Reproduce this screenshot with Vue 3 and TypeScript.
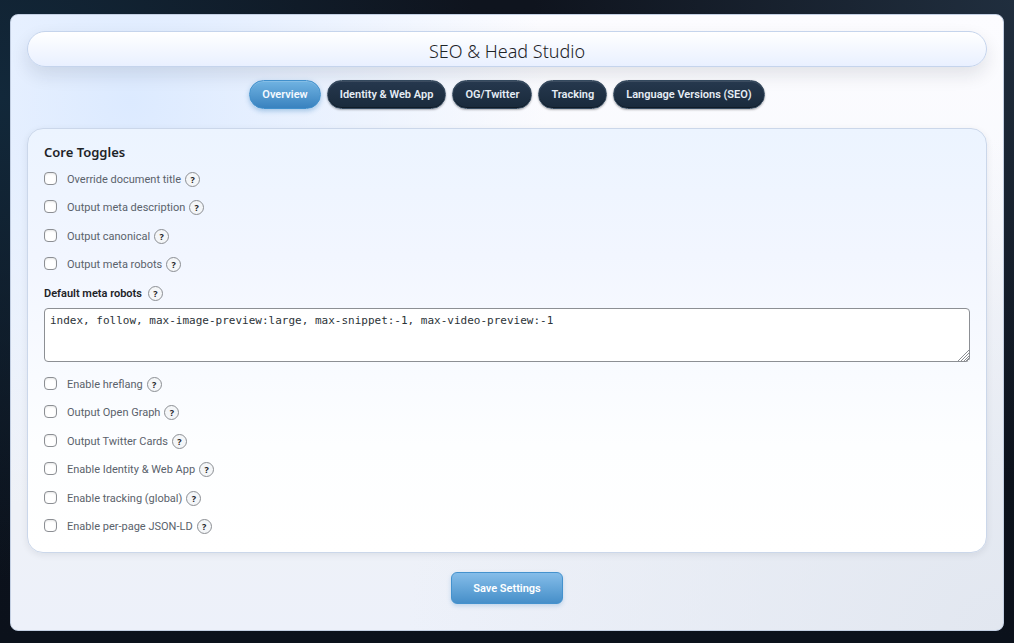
<script setup lang="ts">
import { ref } from 'vue'

interface Toggle {
  id: string
  label: string
  help: string
}

const tabs: string[] = ['Overview', 'Identity & Web App', 'OG/Twitter', 'Tracking', 'Language Versions (SEO)']
const activeTab = ref<string>('Overview')

const metaToggles: Toggle[] = [
  { id: 'document-title', label: 'Override document title', help: 'About document title' },
  { id: 'meta-description', label: 'Output meta description', help: 'About meta description' },
  { id: 'canonical', label: 'Output canonical', help: 'About canonical' },
  { id: 'meta-robots', label: 'Output meta robots', help: 'About meta robots' },
]

const featureToggles: Toggle[] = [
  { id: 'hreflang', label: 'Enable hreflang', help: 'About hreflang' },
  { id: 'open-graph', label: 'Output Open Graph', help: 'About Open Graph' },
  { id: 'twitter-cards', label: 'Output Twitter Cards', help: 'About Twitter Cards' },
  { id: 'identity', label: 'Enable Identity & Web App', help: 'About identity' },
  { id: 'tracking', label: 'Enable tracking (global)', help: 'About tracking' },
  { id: 'json-ld', label: 'Enable per-page JSON-LD', help: 'About JSON-LD' },
]

const enabled = ref<string[]>([])
const robots = ref<string>('index, follow, max-image-preview:large, max-snippet:-1, max-video-preview:-1')
</script>

<template>
  <main class="studio">
    <header class="title-bar">
      <h1>SEO &amp; Head Studio</h1>
    </header>

    <nav class="tabs" aria-label="Sections">
      <button
        v-for="tab in tabs"
        :key="tab"
        type="button"
        class="tab"
        :class="{ active: tab === activeTab }"
        @click="activeTab = tab"
      >{{ tab }}</button>
    </nav>

    <form class="form" @submit.prevent>
      <section class="card">
        <h2>Core Toggles</h2>

        <div class="toggles meta">
          <div v-for="item in metaToggles" :key="item.id" class="toggle">
            <input :id="item.id" v-model="enabled" type="checkbox" :value="item.id" />
            <label :for="item.id">{{ item.label }}</label>
            <button type="button" class="help" :aria-label="item.help">?</button>
          </div>
        </div>

        <div class="field-head">
          <label for="default-robots">Default meta robots</label>
          <button type="button" class="help" aria-label="About default meta robots">?</button>
        </div>
        <textarea id="default-robots" v-model="robots" spellcheck="false"></textarea>

        <div class="toggles features">
          <div v-for="item in featureToggles" :key="item.id" class="toggle">
            <input :id="item.id" v-model="enabled" type="checkbox" :value="item.id" />
            <label :for="item.id">{{ item.label }}</label>
            <button type="button" class="help" :aria-label="item.help">?</button>
          </div>
        </div>
      </section>

      <button type="submit" class="save">Save Settings</button>
    </form>
  </main>
</template>

<style>
html {
  min-height: 100%;
  background:
    radial-gradient(circle at 0% 15%, #12283a 0%, rgba(18, 40, 58, 0) 42%),
    radial-gradient(circle at 100% 0%, #202e3e 0%, rgba(32, 46, 62, 0) 40%),
    linear-gradient(180deg, #0f141e 0%, #0b111b 100%);
}

body {
  margin: 0;
}
</style>

<style scoped>
.studio {
  box-sizing: border-box;
  margin: 14px 10px 12px;
  padding: 16px 16px 26px;
  border: 1px solid #c3cfe2;
  border-radius: 8px;
  background:
    radial-gradient(ellipse 42% 68% at 12% 14%, #dceaff 0%, rgba(220, 234, 255, 0) 100%),
    radial-gradient(ellipse 60% 80% at 100% 100%, #e2e7f0 0%, rgba(226, 231, 240, 0) 100%),
    linear-gradient(180deg, #fcfcff 0%, #f8f9fd 35%, #eef1f7 80%, #edf1fa 100%);
  color: #1d2327;
  font-family: Roboto, "Noto Sans", sans-serif;
  font-size: 11px;
}

.title-bar {
  display: flex;
  align-items: center;
  justify-content: center;
  box-sizing: border-box;
  min-height: 36px;
  padding-top: 3px;
  border: 1px solid #c5d4ec;
  border-radius: 18px;
  background: linear-gradient(180deg, #ffffff 0%, #e9f0ff 100%);
  box-shadow: 0 8px 18px rgba(15, 23, 42, 0.11);
}

h1 {
  margin: 0;
  font-family: "Noto Sans", sans-serif;
  font-size: 18px;
  font-weight: 300;
  line-height: 24px;
}

.tabs {
  display: flex;
  flex-wrap: wrap;
  justify-content: center;
  gap: 6px;
  margin-top: 13px;
}

.tab {
  box-sizing: border-box;
  min-height: 29px;
  padding: 0 12px;
  border: 1px solid #34495e;
  border-radius: 15px;
  background: linear-gradient(180deg, #26384e 0%, #192a3b 100%);
  box-shadow: inset 0 1px 0 rgba(255, 255, 255, 0.1), inset 0 -1px 0 rgba(0, 0, 0, 0.35), 0 1px 2px rgba(0, 0, 0, 0.3);
  color: #e6edf5;
  font: inherit;
  font-weight: 600;
  cursor: pointer;
}

.tab.active {
  border-color: #4190cc;
  background: linear-gradient(180deg, #70b3e2 0%, #3982bf 100%);
  box-shadow: inset 0 1px 0 rgba(255, 255, 255, 0.15), 0 2px 5px rgba(58, 130, 190, 0.4);
  color: #f4f9ff;
}

.form {
  display: flex;
  flex-direction: column;
  align-items: center;
}

.card {
  box-sizing: border-box;
  width: 100%;
  margin-top: 19px;
  padding: 14px 16px 11px;
  border: 1px solid #cbd7ea;
  border-radius: 16px;
  background: linear-gradient(180deg, #ecf4ff 0%, #f2f6ff 30%, #fdfeff 75%, #ffffff 100%);
  box-shadow: 0 2px 7px rgba(15, 23, 42, 0.08);
}

h2 {
  margin: 0 0 4px;
  font-family: "Noto Sans", sans-serif;
  font-size: 13px;
  font-weight: 600;
  line-height: 18px;
}

.toggles {
  display: grid;
  grid-auto-rows: 1fr;
}

.meta {
  min-height: 114px;
}

.features {
  min-height: 171px;
  margin-top: 8px;
}

.toggle {
  display: flex;
  align-items: center;
  color: #5a626b;
}

.toggle input {
  appearance: none;
  box-sizing: border-box;
  width: 13px;
  height: 13px;
  margin: 0 10px 2px 0;
  border: 1px solid #8c8f94;
  border-radius: 4px;
  background: #ffffff;
  box-shadow: inset 0 1px 2px rgba(0, 0, 0, 0.1);
}

.toggle input:checked {
  background: #4190cc;
}

.help {
  box-sizing: border-box;
  width: 15px;
  height: 15px;
  margin: 0 0 0 4px;
  padding: 0;
  border: 1px solid #8c8f94;
  border-radius: 50%;
  background: #f4f6f8;
  color: #1d2327;
  font-family: "Noto Sans", sans-serif;
  font-size: 9px;
  font-weight: 700;
  line-height: 13px;
  text-align: center;
}

.field-head {
  display: flex;
  align-items: center;
  min-height: 29px;
  font-weight: 600;
}

.field-head .help {
  margin-left: 6px;
}

textarea {
  display: block;
  box-sizing: border-box;
  width: 100%;
  height: 54px;
  margin: 0;
  padding: 4px 5px;
  border: 1px solid #8c8f94;
  border-radius: 4px;
  background: #ffffff;
  color: #2c3338;
  font-family: "DejaVu Sans Mono", monospace;
  font-size: 11px;
  line-height: 16px;
  resize: vertical;
}

textarea::-webkit-resizer {
  background:
    linear-gradient(135deg, #ffffff 55%, transparent 55%),
    repeating-linear-gradient(135deg, #ffffff 0 1px, #8c8f94 1px 2px);
}

.save {
  box-sizing: border-box;
  min-height: 32px;
  margin-top: 19px;
  padding: 0 21px;
  border: 1px solid #4492ce;
  border-radius: 6px;
  background: linear-gradient(180deg, #85bde9 0%, #468fc9 100%);
  box-shadow: 0 2px 4px rgba(58, 130, 190, 0.25);
  color: #ffffff;
  font: inherit;
  font-weight: 600;
  cursor: pointer;
}
</style>
